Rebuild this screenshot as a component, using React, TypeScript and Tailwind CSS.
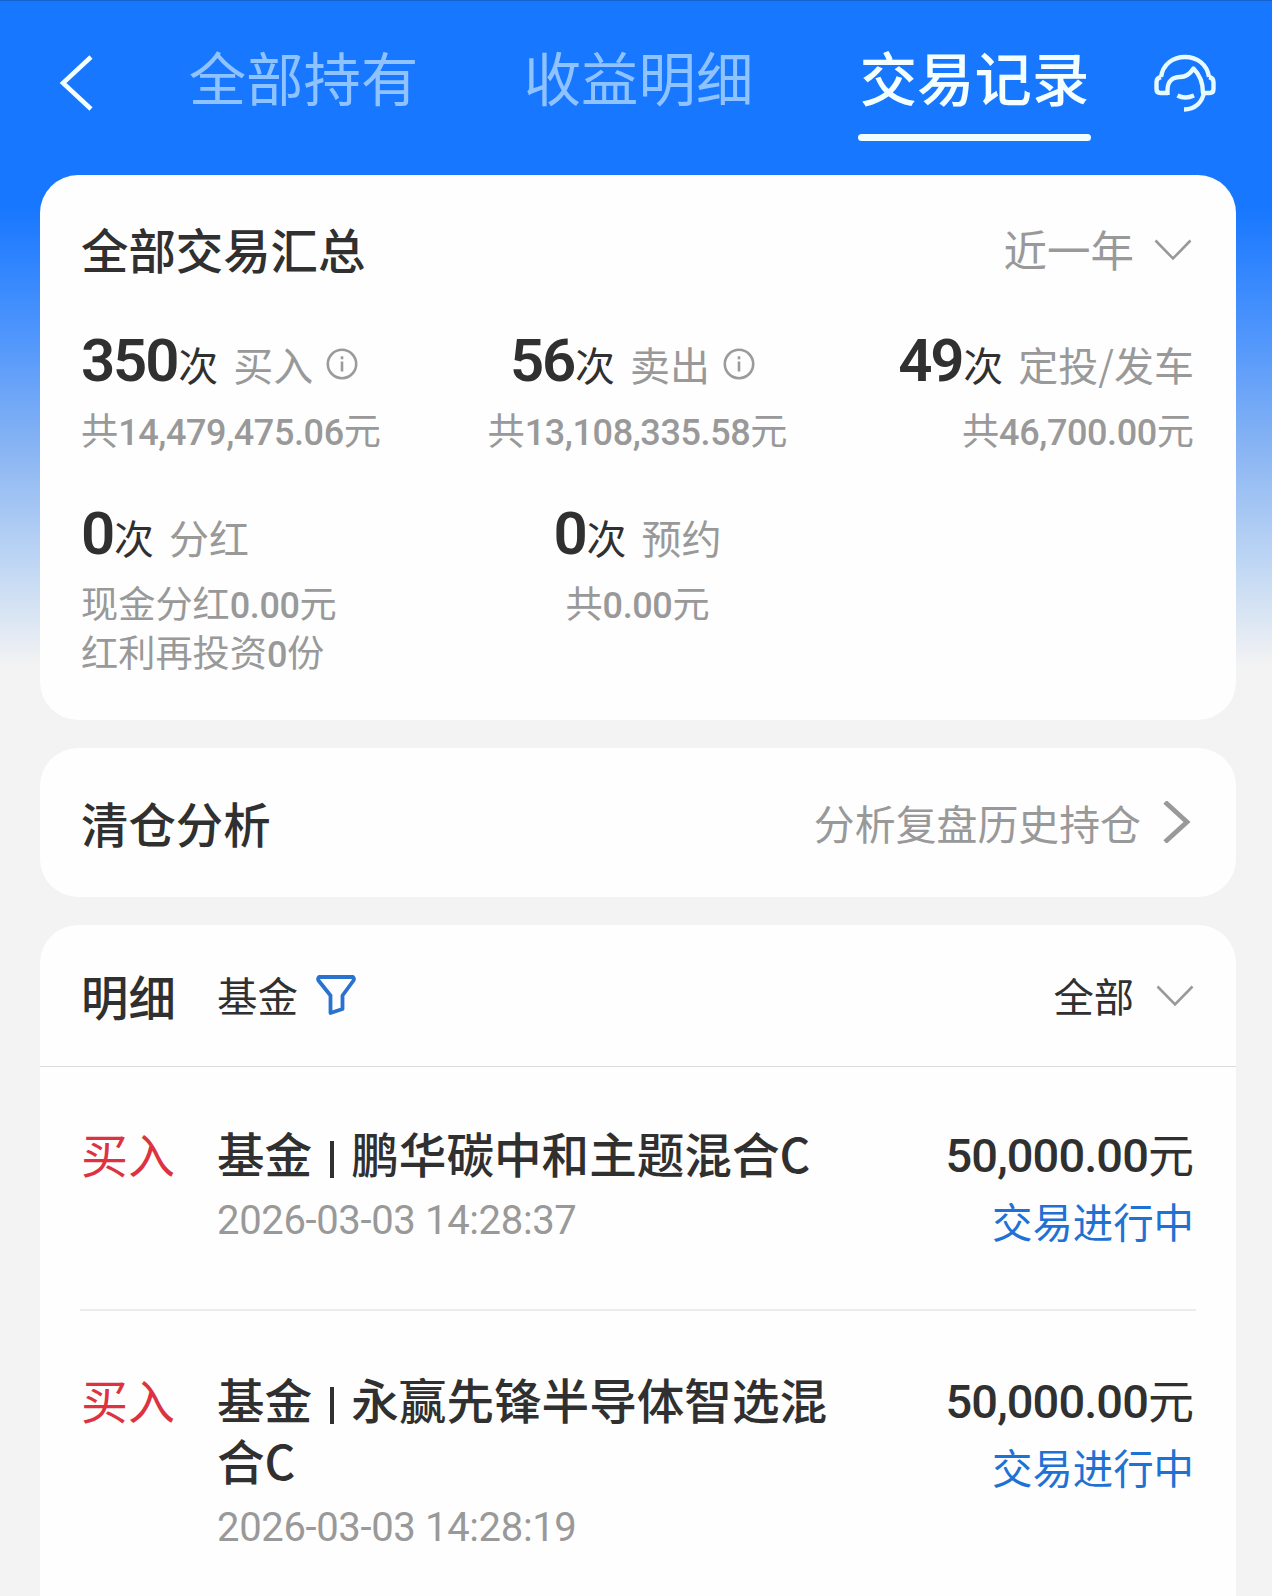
import type { ReactNode } from "react";

type Stat = {
  count: number;
  label: string;
  info?: boolean;
  lines: ReactNode[];
};

type Trade = {
  id: string;
  side: string;
  name: string;
  time: string;
  amount: string;
  status: string;
};

const TABS = ["全部持有", "收益明细", "交易记录"];
const ACTIVE_TAB = "交易记录";

const TRADES: Trade[] = [
  {
    id: "1",
    side: "买入",
    name: "鹏华碳中和主题混合C",
    time: "2026-03-03 14:28:37",
    amount: "50,000.00",
    status: "交易进行中",
  },
  {
    id: "2",
    side: "买入",
    name: "永赢先锋半导体智选混合C",
    time: "2026-03-03 14:28:19",
    amount: "50,000.00",
    status: "交易进行中",
  },
];

function Num({ children }: { children: ReactNode }) {
  return <span className="font-['Roboto'] text-[36px] font-medium tracking-[-0.4px]">{children}</span>;
}

const STATS: Stat[] = [
  { count: 350, label: "买入", info: true, lines: [<>共<Num>14,479,475.06</Num>元</>] },
  { count: 56, label: "卖出", info: true, lines: [<>共<Num>13,108,335.58</Num>元</>] },
  { count: 49, label: "定投/发车", lines: [<>共<Num>46,700.00</Num>元</>] },
  {
    count: 0,
    label: "分红",
    lines: [<>现金分红<Num>0.00</Num>元</>, <>红利再投资<Num>0</Num>份</>],
  },
  { count: 0, label: "预约", lines: [<>共<Num>0.00</Num>元</>] },
];

function BackIcon() {
  return (
    <svg className="h-[56px] w-[34px]" viewBox="0 0 34 56" fill="none" stroke="#f4ffff" strokeWidth="4.5">
      <path d="M32 2 L4 28 L32 54" />
    </svg>
  );
}

function ServiceIcon() {
  return (
    <svg
      className="h-[60px] w-[64px]"
      viewBox="0 0 64 60"
      fill="none"
      stroke="#e6fbff"
      strokeWidth="4.4"
      strokeLinejoin="round"
    >
      <path d="M8 24 C10 11 20 4 32 4 C44 4 54 11 56 24" />
      <path d="M15 40 H7.500 Q3.500 40 3.500 36 V29 Q3.500 25 8 24" />
      <path d="M14.500 42 V37 C14.500 28 20 24 27 24 C33 24 37 21 40.500 15.500 C46 21 50 28 50 40 H56.500 Q60.500 40 60.500 36 V29 Q60.500 25 56 24" />
      <path d="M51 39 C49.500 49.500 42 56.500 31 56.500" />
      <path d="M24.500 42.500 Q32 46.500 41 42.500" />
    </svg>
  );
}

function InfoIcon() {
  return (
    <svg className="h-[32px] w-[32px]" viewBox="0 0 32 32" fill="none" stroke="#9b9b9b" strokeWidth="2.6">
      <circle cx="16" cy="16" r="14.200" />
      <path d="M16 13.500 V23.500" />
      <path d="M16 8.300 V11.300" />
    </svg>
  );
}

function ChevronDown() {
  return (
    <svg className="h-[24px] w-[38px]" viewBox="0 0 38 24" fill="none" stroke="#999" strokeWidth="2.6">
      <path d="M1.500 2.500 L19 20.500 L36.500 2.500" />
    </svg>
  );
}

function ChevronRight() {
  return (
    <svg className="mb-[2px] h-[42px] w-[28px]" viewBox="0 0 28 42" fill="none" stroke="#999" strokeWidth="4.8">
      <path d="M2 1 L24 21 L2 41" />
    </svg>
  );
}

function FilterIcon() {
  return (
    <svg
      className="mb-[2px] h-[42px] w-[42px]"
      viewBox="0 0 42 42"
      fill="none"
      stroke="#2a72cf"
      strokeWidth="3.8"
      strokeLinejoin="round"
    >
      <path d="M4 3 H38 Q39.500 4.500 38.500 6.500 L27.500 21.500 V35 L15.500 39 V21.500 L3.500 6.500 Q2.500 4.500 4 3 Z" />
    </svg>
  );
}

function StatBlock({ stat, align }: { stat: Stat; align: string }) {
  return (
    <div className={`flex flex-col ${align}`}>
      <div className="mb-[8px] flex h-[72px] items-baseline leading-[72px]">
        <span className="font-['Roboto'] text-[60px] font-semibold tracking-[-2.2px] text-[#303030]">{stat.count}</span>
        <span className="ml-px text-[40px] text-[#303030]">次</span>
        <span className="ml-[15px] text-[40px] text-[#999]">{stat.label}</span>
        {stat.info && (
          <span className="mr-[10px] ml-[13px] self-center pt-[6px]">
            <InfoIcon />
          </span>
        )}
      </div>
      {stat.lines.map((line, i) => (
        <div key={i} className="h-[49px] text-[37.200px] leading-[49px] text-[#999]">
          {line}
        </div>
      ))}
    </div>
  );
}

function TradeRow({ trade }: { trade: Trade }) {
  return (
    <div className="flex items-start pt-[55px]">
      <div className="w-[136px] shrink-0 text-[47px] leading-[61px] text-[#dd3340]">{trade.side}</div>
      <div className="w-[620px]">
        <div className="text-[47.600px] leading-[61px] font-medium text-[#303030]">
          基金<span className="mr-[17px] ml-[18px] inline-block h-[37px] w-[4px] bg-[#303030] align-[-5px]" />
          {trade.name}
        </div>
        <div className="mt-[10px] font-['Roboto'] text-[40px] leading-[56px] tracking-[-0.350px] text-[#999]">
          {trade.time}
        </div>
      </div>
      <div className="ml-auto text-right">
        <div className="text-[46px] leading-[61px] text-[#303030]">
          <span className="font-['Roboto'] text-[47px] font-medium tracking-[-0.900px]">{trade.amount}</span>元
        </div>
        <div className="mt-[7px] text-[40.400px] leading-[56px] text-[#1f72d4]">{trade.status}</div>
      </div>
    </div>
  );
}

export default function App() {
  return (
    <div className="flex h-[1596px] w-[1272px] flex-col overflow-hidden border-t border-[#1661cc] bg-[linear-gradient(to_bottom,#1777ff_0px,#1777ff_205px,#5297fc_340px,#88b4f3_446px,#c3d9f4_571px,#f3f3f3_665px)] font-['Noto_Sans_CJK_SC',sans-serif]">
      <header className="flex h-[174px] shrink-0 items-start pl-[59px]">
        <div className="mt-[54px]">
          <BackIcon />
        </div>
        <nav className="ml-[95px] flex gap-[102px]">
          {TABS.map((tab) => (
            <div key={tab} className="flex w-[233px] flex-col items-center pt-[38px]">
              <span
                className={
                  tab === ACTIVE_TAB
                    ? "text-[57.400px] leading-[74px] font-medium whitespace-nowrap text-[#f4ffff]"
                    : "-ml-[2px] text-[57.400px] leading-[74px] whitespace-nowrap text-[#8fc3ff]"
                }
              >
                {tab}
              </span>
              {tab === ACTIVE_TAB && <span className="mt-[21px] h-[7px] w-[233px] rounded-full bg-[#f0ffff]" />}
            </div>
          ))}
        </nav>
        <div className="mt-[52px] ml-[62px]">
          <ServiceIcon />
        </div>
      </header>

      <main className="flex flex-1 flex-col gap-[28px] pr-[36px] pl-[40px]">
        <section className="h-[545px] shrink-0 rounded-[38px] bg-[#fefefe] pt-[43px] pr-[42px] pl-[41px]">
          <div className="flex h-[61px] items-center justify-between">
            <h1 className="text-[47.400px] font-medium text-[#303030]">全部交易汇总</h1>
            <div className="flex items-center gap-[20px] pr-[2px] text-[43.500px] text-[#999]">
              近一年
              <span className="pt-[3px]">
                <ChevronDown />
              </span>
            </div>
          </div>
          <div className="mt-[46px] grid grid-cols-3 gap-y-[44px]">
            {STATS.map((stat, i) => (
              <StatBlock
                key={stat.label}
                stat={stat}
                align={i % 3 === 0 ? "items-start" : i % 3 === 1 ? "items-center" : "items-end"}
              />
            ))}
          </div>
        </section>

        <section className="flex h-[149px] shrink-0 items-center justify-between rounded-[38px] bg-[#fefefe] pt-px pr-[45px] pl-[41px]">
          <h2 className="text-[47.400px] font-medium text-[#303030]">清仓分析</h2>
          <div className="flex items-center gap-[22px] text-[40.900px] text-[#999]">
            分析复盘历史持仓
            <ChevronRight />
          </div>
        </section>

        <section className="flex-1 rounded-t-[38px] bg-[#fefefe]">
          <div className="flex h-[142px] items-center border-b border-[#dcdcdc] pr-[42px] pl-[41px]">
            <h2 className="w-[136px] pt-px text-[47.400px] font-medium text-[#303030]">明细</h2>
            <div className="flex items-center gap-[17px] text-[40.500px] text-[#303030]">
              基金
              <FilterIcon />
            </div>
            <div className="ml-auto flex items-center gap-[22px] text-[40.300px] text-[#303030]">
              全部
              <ChevronDown />
            </div>
          </div>
          <div className="pr-[42px] pl-[41px]">
            {TRADES.map((trade, i) => (
              <div key={trade.id}>
                {i > 0 && <div className="-mr-[2px] mt-[60px] mb-[2px] -ml-px h-[2px] bg-[#ebebeb]" />}
                <TradeRow trade={trade} />
              </div>
            ))}
          </div>
        </section>
      </main>
    </div>
  );
}
